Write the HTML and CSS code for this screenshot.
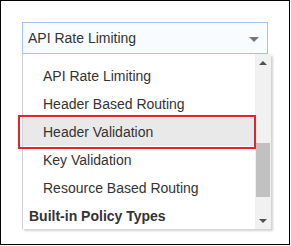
FILE: index.html
```html
<!DOCTYPE html>
<html>
<head>
<meta charset="utf-8">
<link rel="stylesheet" href="styles.css">
</head>
<body>
<div class="frame">
  <div class="select">
    <span class="select-text">API Rate Limiting</span>
    <span class="caret"></span>
  </div>
  <div class="list">
    <div class="options">
      <div class="option">API Rate Limiting</div>
      <div class="option">Header Based Routing</div>
      <div class="option selected">Header Validation<span class="callout"></span></div>
      <div class="option">Key Validation</div>
      <div class="option">Resource Based Routing</div>
      <div class="group">Built-in Policy Types</div>
    </div>
    <div class="scrollbar">
      <div class="sb-btn"><span class="tri-up"></span></div>
      <div class="sb-track"><div class="sb-thumb"></div></div>
      <div class="sb-btn"><span class="tri-down"></span></div>
    </div>
  </div>
</div>
</body>
</html>
```
FILE: styles.css
```css
html, body {
  margin: 0;
  padding: 0;
  background: #fff;
}
.frame {
  box-sizing: border-box;
  width: 290px;
  height: 245px;
  border: 1px solid #000;
  padding: 21px 0 0 21px;
  font-family: "Liberation Sans", Arial, sans-serif;
  font-size: 14px;
  color: #333;
}
.select {
  box-sizing: border-box;
  width: 246px;
  height: 32px;
  border: 1px solid #a3c3f3;
  background: #f8fbff;
  display: flex;
  align-items: center;
  justify-content: space-between;
  padding: 0 8px 0 5px;
}
.caret {
  width: 0;
  height: 0;
  border-left: 5px solid transparent;
  border-right: 5px solid transparent;
  border-top: 5px solid #777;
  margin-top: 2px;
}
.list {
  box-sizing: border-box;
  width: 249px;
  height: 175px;
  border-left: 1px solid #d0d0d0;
  background: #fff;
  box-shadow: 2px 2px 2px rgba(0,0,0,0.18);
  display: flex;
}
.options {
  flex: 1;
  padding-top: 8px;
  position: relative;
  z-index: 2;
}
.option {
  position: relative;
  height: 28px;
  line-height: 28px;
  padding-left: 20px;
  white-space: nowrap;
}
.option.selected {
  background: #e9e9ea;
}
.callout {
  position: absolute;
  left: -5px;
  right: -1px;
  top: -3px;
  bottom: -3px;
  border: 2px solid #e8212a;
}
.group {
  height: 28px;
  line-height: 28px;
  padding-left: 6px;
  font-weight: bold;
  white-space: nowrap;
}
.scrollbar {
  width: 16px;
  background: #f1f1f1;
  display: flex;
  flex-direction: column;
}
.sb-btn {
  height: 17px;
  display: flex;
  align-items: center;
  justify-content: center;
}
.tri-up {
  width: 0;
  height: 0;
  border-left: 4px solid transparent;
  border-right: 4px solid transparent;
  border-bottom: 4px solid #505050;
}
.tri-down {
  width: 0;
  height: 0;
  border-left: 4px solid transparent;
  border-right: 4px solid transparent;
  border-top: 4px solid #505050;
}
.sb-track {
  flex: 1;
}
.sb-thumb {
  margin: 72px 1px 0 1px;
  height: 54px;
  background: #c1c1c1;
}
```
